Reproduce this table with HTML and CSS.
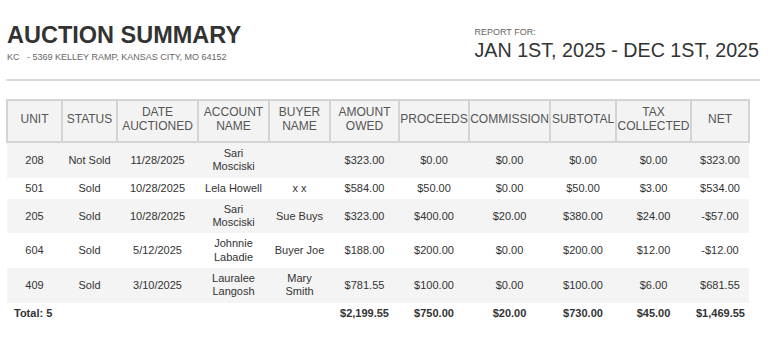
FILE: index.html
```html
<!DOCTYPE html>
<html lang="en">
<head>
<meta charset="utf-8">
<title>Auction Summary</title>
<link rel="stylesheet" href="styles.css">
</head>
<body>
<div class="page">
  <header class="report-head">
    <div class="title-block">
      <h1 class="title">AUCTION SUMMARY</h1>
      <p class="address">KC&nbsp;&nbsp; - 5369 KELLEY RAMP, KANSAS CITY, MO 64152</p>
    </div>
    <div class="period">
      <p class="period-label">REPORT FOR:</p>
      <p class="period-range">JAN 1ST, 2025 - DEC 1ST, 2025</p>
    </div>
  </header>
  <hr class="divider">
  <table class="summary">
    <colgroup>
      <col class="c-unit"><col class="c-status"><col class="c-date"><col class="c-account"><col class="c-buyer"><col class="c-owed"><col class="c-proceeds"><col class="c-commission"><col class="c-subtotal"><col class="c-tax"><col class="c-net">
    </colgroup>
    <thead>
      <tr>
        <th>UNIT</th><th>STATUS</th><th>DATE AUCTIONED</th><th>ACCOUNT NAME</th><th>BUYER NAME</th><th>AMOUNT OWED</th><th>PROCEEDS</th><th>COMMISSION</th><th>SUBTOTAL</th><th>TAX COLLECTED</th><th>NET</th>
      </tr>
    </thead>
    <tbody>
      <tr>
        <td>208</td><td>Not Sold</td><td>11/28/2025</td><td>Sari Mosciski</td><td></td><td>$323.00</td><td>$0.00</td><td>$0.00</td><td>$0.00</td><td>$0.00</td><td>$323.00</td>
      </tr>
      <tr>
        <td>501</td><td>Sold</td><td>10/28/2025</td><td>Lela Howell</td><td>x x</td><td>$584.00</td><td>$50.00</td><td>$0.00</td><td>$50.00</td><td>$3.00</td><td>$534.00</td>
      </tr>
      <tr>
        <td>205</td><td>Sold</td><td>10/28/2025</td><td>Sari Mosciski</td><td>Sue Buys</td><td>$323.00</td><td>$400.00</td><td>$20.00</td><td>$380.00</td><td>$24.00</td><td>-$57.00</td>
      </tr>
      <tr>
        <td>604</td><td>Sold</td><td>5/12/2025</td><td>Johnnie Labadie</td><td>Buyer Joe</td><td>$188.00</td><td>$200.00</td><td>$0.00</td><td>$200.00</td><td>$12.00</td><td>-$12.00</td>
      </tr>
      <tr>
        <td>409</td><td>Sold</td><td>3/10/2025</td><td>Lauralee Langosh</td><td>Mary Smith</td><td>$781.55</td><td>$100.00</td><td>$0.00</td><td>$100.00</td><td>$6.00</td><td>$681.55</td>
      </tr>
    </tbody>
    <tfoot>
      <tr>
        <td class="total-label" colspan="5">Total: 5</td><td>$2,199.55</td><td>$750.00</td><td>$20.00</td><td>$730.00</td><td>$45.00</td><td>$1,469.55</td>
      </tr>
    </tfoot>
  </table>
</div>
</body>
</html>
```
FILE: styles.css
```css
* { box-sizing: border-box; }
html, body { margin: 0; padding: 0; background: #fff; }
body {
  font-family: "Liberation Sans", Arial, sans-serif;
  color: #333;
}
.page {
  width: 771px;
  padding: 19px 11px 0 6px;
}
.report-head {
  display: flex;
  justify-content: space-between;
  align-items: flex-start;
}
.title {
  margin: 2px 0 0;
  font-size: 23.5px;
  line-height: 28px;
  font-weight: bold;
  color: #333;
  padding-left: 1px;
}
.address {
  margin: 3px 0 0 1px;
  font-size: 9px;
  line-height: 11px;
  color: #666;
}
.period {
  margin-top: 8px;
  padding-right: 1px;
}
.period-label {
  margin: 0;
  font-size: 9px;
  line-height: 11px;
  color: #666;
}
.period-range {
  margin: 1px 0 0;
  font-size: 19.7px;
  line-height: 22px;
  color: #333;
}
.divider {
  margin: 16px 0 0;
  border: 0;
  height: 2px;
  background: #d9d9d9;
}
.summary {
  margin-top: 18px;
  width: 742px;
  table-layout: fixed;
  border-collapse: collapse;
  font-size: 11px;
}
.c-unit { width: 55px; }
.c-status { width: 55px; }
.c-date { width: 81px; }
.c-account { width: 71px; }
.c-buyer { width: 61px; }
.c-owed { width: 69px; }
.c-proceeds { width: 70px; }
.c-commission { width: 81px; }
.c-subtotal { width: 66px; }
.c-tax { width: 75px; }
.c-net { width: 58px; }
.summary th {
  border: 2px solid #d4d4d4;
  background: #f3f3f3;
  color: #555;
  font-weight: normal;
  font-size: 12px;
  line-height: 14px;
  padding: 4px 0 8px;
  text-align: center;
  vertical-align: middle;
  white-space: normal;
}
.summary td {
  padding: 4px 5px;
  line-height: 13.3px;
  text-align: center;
  vertical-align: middle;
  color: #333;
}
.summary tbody tr:nth-child(odd) { background: #f4f4f4; }
.summary tfoot td { font-weight: bold; }
.summary tfoot .total-label {
  text-align: left;
  padding-left: 7px;
}
```
